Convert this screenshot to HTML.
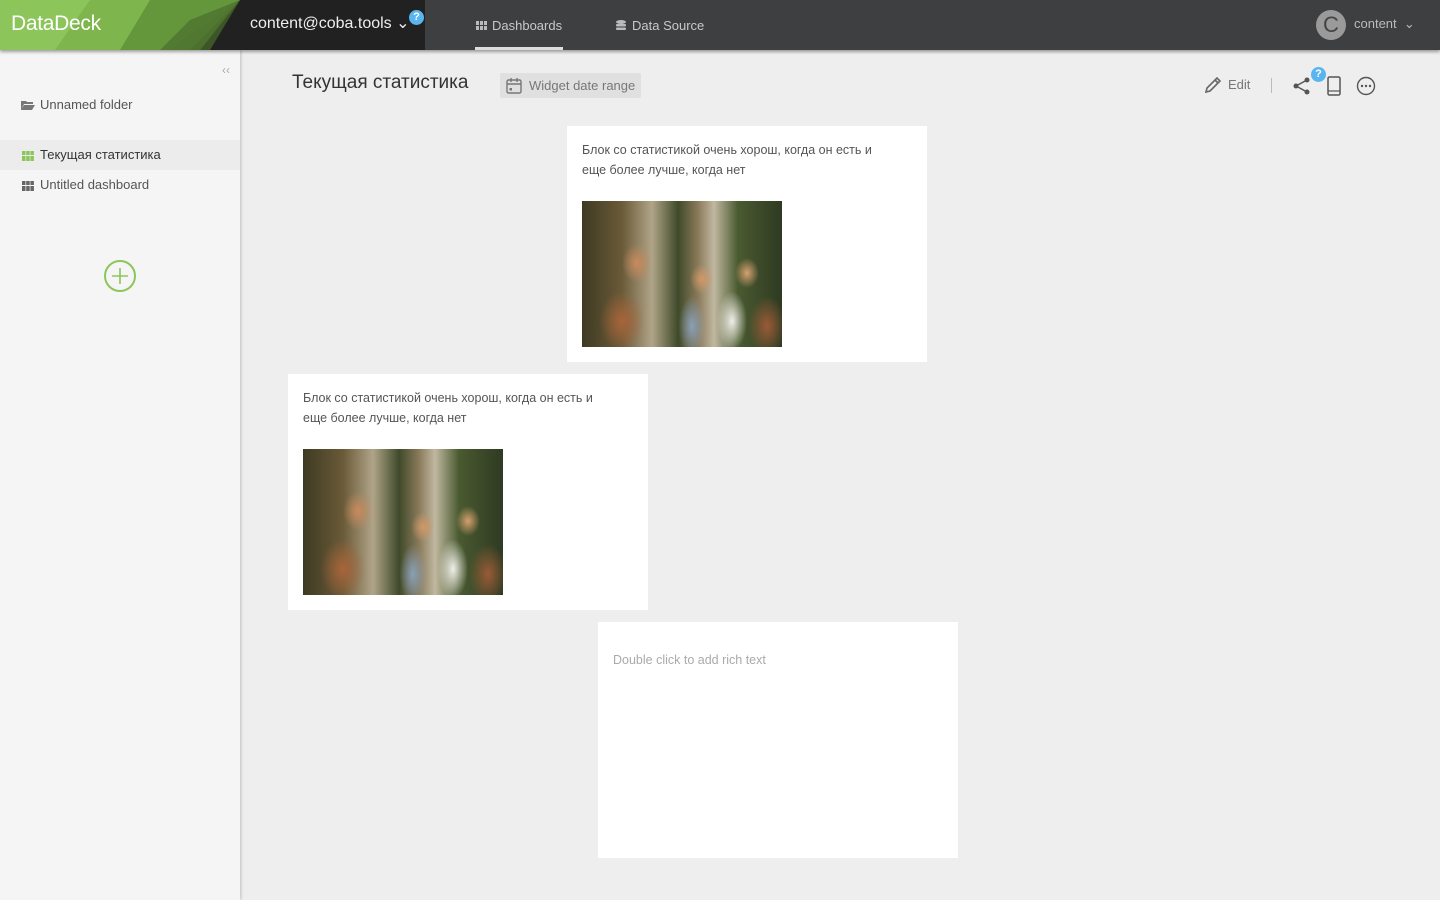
<!DOCTYPE html>
<html><head><meta charset="utf-8"><style>
*{box-sizing:border-box;margin:0;padding:0}
body{width:1440px;height:900px;overflow:hidden;background:#eeeeee;font-family:"Liberation Sans","Noto Sans CJK SC",sans-serif;position:relative}
.top{position:absolute;left:0;top:0;width:1440px;height:50px;background:#3e3f41;box-shadow:0 2px 3px rgba(0,0,0,.35);z-index:3}
.logo{position:absolute;left:0;top:0;width:425px;height:50px;background:#212121;overflow:hidden}
.logo svg{position:absolute;left:0;top:0}
.brand{position:absolute;left:11px;top:12px;color:#fff;font-size:21px;letter-spacing:-.3px}
.acct{position:absolute;left:250px;top:13px;color:#eee;font-size:16px}
.q{position:absolute;width:15px;height:15px;border-radius:50%;background:#5ab4f0;color:#fff;font-size:11px;font-weight:bold;text-align:center;line-height:15px}
.nav{position:absolute;top:18px;color:#c8c8c8;font-size:13px}
.side{position:absolute;left:0;top:50px;width:240px;height:850px;background:#f5f5f5;box-shadow:1px 0 3px rgba(0,0,0,.2);z-index:2}
.item{position:absolute;left:0;width:240px;height:30px;line-height:30px;padding-left:40px;font-size:13px;color:#555}
.grid{position:absolute;left:22px;top:11px;width:12px;height:10px}
.card{position:absolute;background:#fff}
.card p{position:absolute;left:15px;top:14px;width:308px;font-size:12.5px;line-height:20px;color:#555}
.photo{position:absolute;width:200px;height:146px;overflow:hidden;background:
radial-gradient(ellipse 20px 26px at 55px 62px,#c88a5c,transparent 75%),
radial-gradient(ellipse 16px 20px at 120px 78px,#d19868,transparent 75%),
radial-gradient(ellipse 16px 20px at 165px 72px,#d6a070,transparent 75%),
radial-gradient(ellipse 30px 40px at 40px 120px,#a8643a,transparent 75%),
radial-gradient(ellipse 18px 40px at 110px 125px,#8aa0b8,transparent 75%),
radial-gradient(ellipse 20px 40px at 150px 120px,#efefe8,transparent 75%),
radial-gradient(ellipse 25px 40px at 185px 125px,#9a5a36,transparent 75%),
linear-gradient(90deg,#3e3a22 0,#6a5a38 20%,#b0a488 35%,#3f4a2a 48%,#8a7a5a 58%,#c0b8a0 66%,#4a5a30 78%,#2e3a22 100%)}
</style></head><body>
<div class="top">
 <div class="logo">
  <svg width="425" height="50"><polygon points="0,0 240,0 170,50 0,50" fill="#8cc55a"/><polygon points="90,0 240,0 190,50 55,50" fill="#7ab24a" opacity=".8"/><polygon points="150,0 240,0 200,50 120,50" fill="#5e8f38" opacity=".8"/><polygon points="190,20 240,0 210,50 160,50" fill="#4a6e2c" opacity=".7"/></svg>
  <div class="brand">DataDeck</div>
  <div class="acct">content@coba.tools ⌄</div>
  <div class="q" style="left:409px;top:10px">?</div>
 </div>
 <div class="nav" style="left:476px"><svg width="11" height="9" style="margin-right:5px"><g fill="#bbb"><rect width="3" height="4"/><rect x="4" width="3" height="4"/><rect x="8" width="3" height="4"/><rect y="5" width="3" height="4"/><rect x="4" y="5" width="3" height="4"/><rect x="8" y="5" width="3" height="4"/></g></svg>Dashboards</div>
 <div style="position:absolute;left:475px;top:47px;width:88px;height:3px;background:#ddd"></div>
 <div class="nav" style="left:616px"><svg width="10" height="10" style="margin-right:6px"><g fill="#bbb"><ellipse cx="5" cy="2" rx="5" ry="2"/><rect y="4" width="10" height="2.5" rx="1"/><rect y="7.5" width="10" height="2.5" rx="1"/></g></svg>Data Source</div>
 <div style="position:absolute;left:1316px;top:10px;width:30px;height:30px;border-radius:50%;background:#9a9a9a;color:#444;font-size:22px;text-align:center;line-height:30px">C</div>
 <div class="nav" style="left:1354px;top:16px;color:#bbb">content&nbsp; ⌄</div>
</div>
<div class="side">
 <div style="position:absolute;left:222px;top:13px;color:#aaa;font-size:12px">‹‹</div>
 <div class="item" style="top:40px"><svg style="position:absolute;left:21px;top:10px" width="14" height="10"><path d="M0 1h5l1 1h6v2H3L0 10z M3 5h11l-3 5H0z" fill="#777"/></svg>Unnamed folder</div>
 <div class="item" style="top:90px;background:#ececec;color:#333"><svg class="grid" viewBox="0 0 12 10"><g fill="#8cc55a"><rect width="3.5" height="4"/><rect x="4.2" width="3.5" height="4"/><rect x="8.4" width="3.5" height="4"/><rect y="5" width="3.5" height="5"/><rect x="4.2" y="5" width="3.5" height="5"/><rect x="8.4" y="5" width="3.5" height="5"/></g></svg>Текущая статистика</div>
 <div class="item" style="top:120px"><svg class="grid" viewBox="0 0 12 10"><g fill="#666"><rect width="3.5" height="4"/><rect x="4.2" width="3.5" height="4"/><rect x="8.4" width="3.5" height="4"/><rect y="5" width="3.5" height="5"/><rect x="4.2" y="5" width="3.5" height="5"/><rect x="8.4" y="5" width="3.5" height="5"/></g></svg>Untitled dashboard</div>
 <svg style="position:absolute;left:103px;top:209px" width="34" height="34"><circle cx="17" cy="17" r="15" fill="none" stroke="#8cc55a" stroke-width="2"/><path d="M17 9v16M9 17h16" stroke="#8cc55a" stroke-width="1.6"/></svg>
</div>
<div style="position:absolute;left:292px;top:72px;font-size:19px;color:#333">Текущая статистика</div>
<div style="position:absolute;left:500px;top:73px;width:141px;height:25px;background:#e0e0e0;border-radius:2px;font-size:13px;color:#777;line-height:25px;padding-left:29px">
 <svg style="position:absolute;left:6px;top:4px" width="16" height="17"><rect x="1" y="3" width="14" height="13" rx="1.5" fill="none" stroke="#777" stroke-width="1.4"/><path d="M1 7h14M5 1v4M11 1v4" stroke="#777" stroke-width="1.4"/><rect x="3.5" y="11" width="2.5" height="2.5" fill="#777"/></svg>Widget date range</div>
<svg style="position:absolute;left:1204px;top:76px" width="18" height="18"><path d="M2 16l1-4L13 2l3 3L6 15z M11 4l3 3" fill="none" stroke="#666" stroke-width="1.6"/></svg>
<div style="position:absolute;left:1228px;top:77px;font-size:13px;color:#777">Edit</div>
<div style="position:absolute;left:1271px;top:78px;width:1px;height:15px;background:#bbb"></div>
<svg style="position:absolute;left:1293px;top:77px" width="18" height="18"><circle cx="3" cy="9" r="2.5" fill="#555"/><circle cx="14" cy="3" r="2.5" fill="#555"/><circle cx="14" cy="15" r="2.5" fill="#555"/><path d="M3 9L14 3M3 9l11 6" stroke="#555" stroke-width="1.5"/></svg>
<div class="q" style="left:1311px;top:67px">?</div>
<svg style="position:absolute;left:1327px;top:76px" width="14" height="20"><rect x="1" y="1" width="12" height="18" rx="1.5" fill="none" stroke="#555" stroke-width="1.5"/><path d="M1 15h12" stroke="#555" stroke-width="1.2"/></svg>
<svg style="position:absolute;left:1356px;top:76px" width="20" height="20"><circle cx="10" cy="10" r="8.5" fill="none" stroke="#555" stroke-width="1.4"/><circle cx="6" cy="10" r="1.2" fill="#555"/><circle cx="10" cy="10" r="1.2" fill="#555"/><circle cx="14" cy="10" r="1.2" fill="#555"/></svg>
<div class="card" style="left:567px;top:126px;width:360px;height:236px"><p>Блок со статистикой очень хорош, когда он есть и еще более лучше, когда нет</p><div class="photo" style="left:15px;top:75px"></div></div>
<div class="card" style="left:288px;top:374px;width:360px;height:236px"><p>Блок со статистикой очень хорош, когда он есть и еще более лучше, когда нет</p><div class="photo" style="left:15px;top:75px"></div></div>
<div class="card" style="left:598px;top:622px;width:360px;height:236px"><p style="top:28px;color:#aaa">Double click to add rich text</p></div>
</body></html>
